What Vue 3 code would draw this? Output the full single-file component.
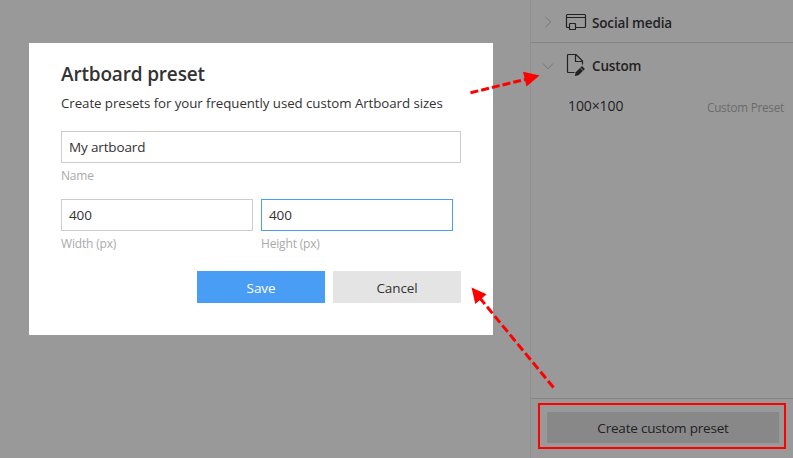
<script setup>
import { ref } from 'vue'

const form = ref({ name: 'My artboard', width: '400', height: '400' })
</script>

<template>
  <div class="screen">
    <main class="canvas">
      <section class="dialog">
        <h1><span>Artboard preset</span></h1>
        <p class="intro"><span>Create presets for your frequently used custom Artboard sizes</span></p>
        <div class="field">
          <div class="input"><span class="name-value">{{ form.name }}</span></div>
          <label><span>Name</span></label>
        </div>
        <div class="sizes">
          <div class="field">
            <div class="input"><span>{{ form.width }}</span></div>
            <label><span>Width (px)</span></label>
          </div>
          <div class="field">
            <div class="input focused"><span>{{ form.height }}</span></div>
            <label><span>Height (px)</span></label>
          </div>
        </div>
        <div class="actions">
          <button class="save"><span>Save</span></button>
          <button class="cancel"><span>Cancel</span></button>
        </div>
      </section>
    </main>

    <aside class="panel">
      <div class="group social">
        <svg class="chevron" width="12" height="12" viewBox="0 0 12 12"><path d="M3.5 1 8.8 6 3.5 11" /></svg>
        <svg class="icon" width="22" height="22" viewBox="0 0 22 22">
          <path d="M4 16.500H2.500Q1.500 16.500 1.500 15.500V4.500Q1.500 3.500 2.500 3.500H19.500Q20.500 3.500 20.500 4.500V15.500Q20.500 16.500 19.500 16.500H11M1.500 6.500H20.500" />
          <rect x="4.500" y="12.500" width="6" height="6" rx=".6" />
        </svg>
        <span class="title">Social media</span>
      </div>
      <div class="group custom">
        <svg class="chevron" width="12" height="12" viewBox="0 0 12 12"><path d="M1 3.500 6 8.800 11 3.500" /></svg>
        <svg class="icon" width="22" height="24" viewBox="0 0 22 24">
          <path d="M9.500 18.500H3.500Q2.500 18.500 2.500 17.500V1.500Q2.500 .5 3.500 .5H11L17.500 7V10.500M10.500 .5V7.500H17.500" />
          <path class="pencil" d="M9.800 22 10.700 18.300 17 12 19.900 14.900 13.500 21.200Z" />
          <path class="gap" d="m15.200 13.800 2.900 2.900" />
        </svg>
        <span class="title">Custom</span>
      </div>
      <div class="preset">
        <span class="dim">100×100</span>
        <span class="kind">Custom Preset</span>
      </div>
      <footer>
        <div class="highlight">
          <button class="create"><span>Create custom preset</span></button>
        </div>
      </footer>
    </aside>

    <svg class="arrows" width="793" height="458" viewBox="0 0 793 458">
      <path class="shaft" stroke-dasharray="8 3" d="M470.500 92.800 526 79.200" />
      <path class="head" d="M539.500 75.500 523 71.800 526.500 86.500Z" />
      <path class="shaft" stroke-dasharray="8.500 3.500" d="M553.500 387.500 479 297" />
      <path class="head" d="M471.500 287.500 486.500 294.300 475.300 304Z" />
    </svg>
  </div>
</template>

<style>
body { margin: 0; }
</style>

<style scoped>
.screen {
  position: relative;
  display: flex;
  box-sizing: border-box;
  width: 793px;
  height: 458px;
  overflow: hidden;
  background: #999;
  color: #333;
  font: 14px/20px "Open Sans", "Noto Sans", sans-serif;
}
.canvas { box-sizing: border-box; width: 530px; padding: 43px 0 0 29px; }
.dialog { box-sizing: border-box; width: 464px; height: 292px; padding: 18px 32px; background: #fff; }
span { white-space: nowrap; }
h1 { margin: 0; font-size: 19px; line-height: 26px; font-weight: 600; letter-spacing: -.17px; }
.intro { margin: 6px 0 18px; font-size: 13.300px; line-height: 20px; letter-spacing: -.07px; }
.input {
  display: flex;
  align-items: center;
  box-sizing: border-box;
  height: 32px;
  padding: 0 7px;
  border: 1px solid #ccc;
  font-size: 13.500px;
  letter-spacing: -.15px;
}
.input.focused { border-color: #4a9df5; }
label { display: block; margin-top: 5px; font-size: 12px; line-height: 16px; letter-spacing: -.17px; color: #aaa; }
.sizes { display: grid; grid-template-columns: 192px 192px; gap: 8px; margin-top: 15px; }
.actions { display: flex; justify-content: flex-end; gap: 8px; margin-top: 19px; }
button { border: 0; padding: 0; font: inherit; color: inherit; }
.actions button { width: 128px; height: 32px; padding-top: 2px; background: #e4e4e4; font-size: 13.500px; letter-spacing: -.1px; }
.actions .save { background: #4a9df5; color: #fff; }

.panel {
  display: flex;
  flex-direction: column;
  box-sizing: border-box;
  width: 263px;
  border-left: 1px solid #8f8f8f;
  color: #222;
}
.group { display: flex; align-items: center; box-sizing: border-box; padding-left: 11px; }
.social { height: 43px; border-bottom: 1px solid #858585; padding-top: 2px; }
.social .title { padding-top: 2px; }
.custom { height: 46px; }
.chevron { margin-right: 11px; fill: none; stroke: #777; }
.icon { fill: none; stroke: #222; stroke-width: 1.200; }
.icon .pencil { fill: #222; stroke: none; }
.icon .gap { stroke: #999; stroke-width: .8; }
.title { margin-left: 5px; font-weight: 600; font-size: 13.500px; letter-spacing: -.16px; }
.preset { display: flex; justify-content: space-between; align-items: center; height: 34px; padding: 0 9px 0 37px; }
.dim { letter-spacing: -.1px; }
.kind { padding-top: 2px; font-size: 11.700px; letter-spacing: -.22px; color: #6b6b6b; }
footer { margin-top: auto; box-sizing: border-box; height: 60px; padding: 4px 7px; border-top: 1px solid #858585; }
.highlight { box-sizing: border-box; width: 248px; height: 46px; padding: 7px; border: 2px solid #f00; }
.create { display: block; width: 232px; height: 31px; padding-top: 1px; background: #888; font-size: 13.500px; letter-spacing: -.2px; }
.arrows { position: absolute; inset: 0; pointer-events: none; }
.shaft { stroke: #f00; stroke-width: 3; fill: none; }
.head { fill: #f00; }
</style>
